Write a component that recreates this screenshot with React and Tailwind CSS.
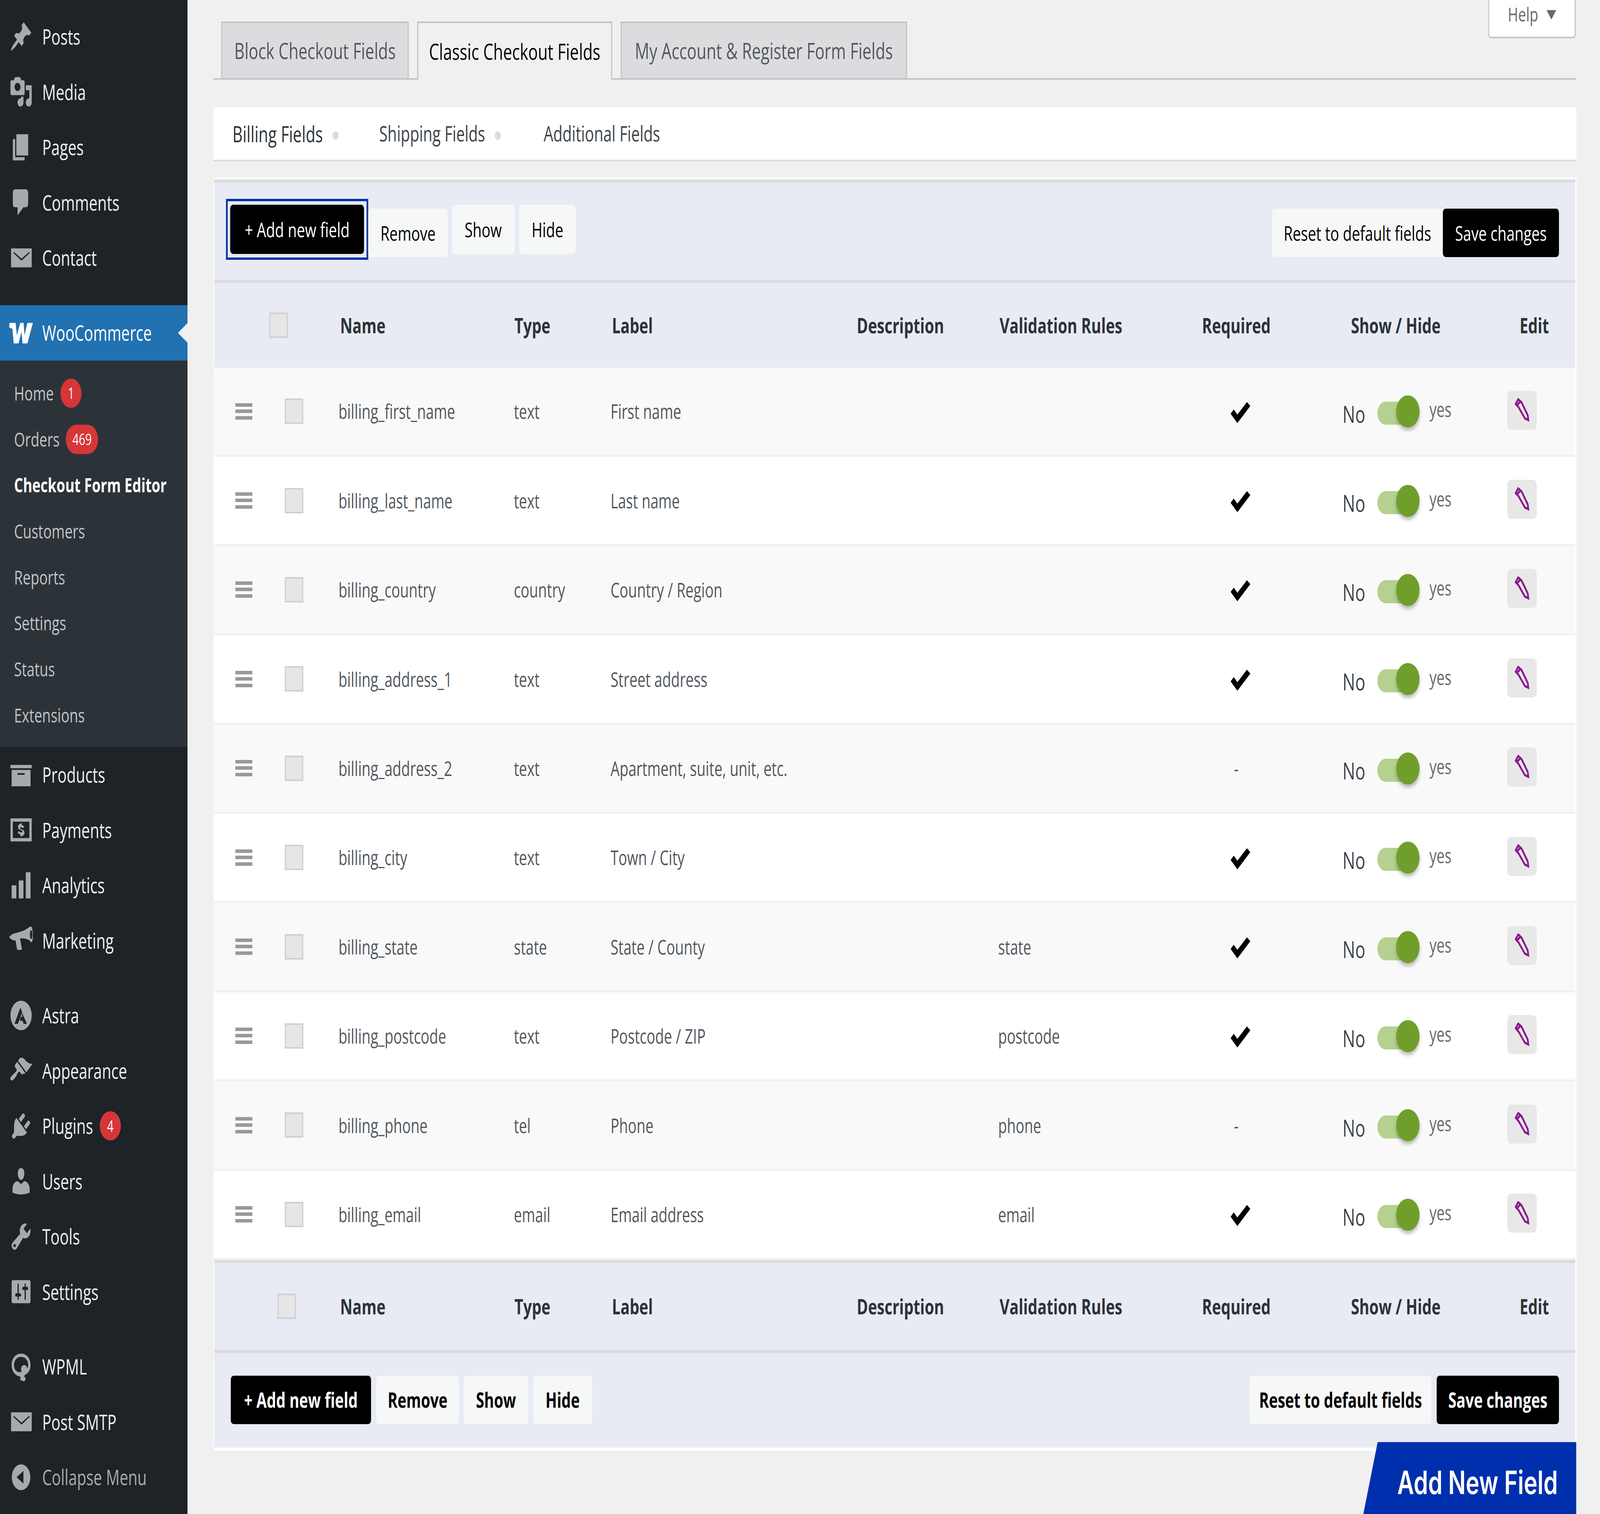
import React, { useState } from "react";

// dashicons-ish paths, 20x20 box
const paths = {
    post: "M10.44 3.02l1.82-1.82 6.36 6.35-1.83 1.82c-1.05-.68-2.48-.57-3.41.36l-.75.75c-.92.93-1.04 2.35-.35 3.41l-1.83 1.82-2.41-2.41-2.8 2.79c-.42.42-3.38 2.71-3.8 2.29s1.86-3.39 2.28-3.81l2.79-2.79L4.1 9.36l1.83-1.82c1.05.69 2.48.57 3.41-.36l.75-.75c.93-.92 1.04-2.35.35-3.41z",
    media: "M13 11V4c0-.55-.45-1-1-1h-1.67L9 1H5L3.67 3H2c-.55 0-1 .45-1 1v7c0 .55.45 1 1 1h10c.55 0 1-.45 1-1zM7 4.5c1.38 0 2.5 1.12 2.5 2.5S8.38 9.5 7 9.5 4.5 8.38 4.5 7 5.62 4.5 7 4.5zM14 6h5v10.5c0 1.38-1.12 2.5-2.5 2.5S14 17.88 14 16.5s1.12-2.5 2.5-2.5c.17 0 .34.02.5.05V9h-3V6zm-4 8.05V13h2v3.5c0 1.38-1.12 2.5-2.5 2.5S7 17.88 7 16.5 8.12 14 9.5 14c.17 0 .34.02.5.05z",
    page: "M6 15V2h10v13H6zm-1 1h8v2H3V5h2v11z",
    comment: "M5 2h9c1.1 0 2 .9 2 2v7c0 1.1-.9 2-2 2h-2l-5 5v-5H5c-1.1 0-2-.9-2-2V4c0-1.1.9-2 2-2z",
    mail: "M1.500 4.200H19v11.600H1.500zM3.800 6.300L10.400 10.500 17 6.300 17.300 7 10.400 11.700 3.500 7z",
    product: "M19 4v2H1V4h18zM2 7h16v10H2V7zm11 3V9H7v1h6z",
    payment: "M1 3h18v14H1V3zm2 2v10h14V5H3zm7.6 1v1.1c1 .1 1.7.5 2.1 1.1l-1.2.8c-.3-.4-.7-.6-1.3-.6-.6 0-1 .2-1 .6 0 .4.4.5 1.3.7 1.3.3 2.4.7 2.4 2 0 1.1-.8 1.8-2.3 2V14H9.4v-1.2c-1.1-.1-1.9-.6-2.3-1.3l1.2-.8c.4.5.9.8 1.6.8.7 0 1.2-.2 1.2-.6 0-.4-.5-.6-1.4-.8-1.2-.3-2.3-.7-2.3-1.9 0-1 .8-1.7 2-1.9V6h1.2z",
    analytics: "M18 18V2h-4v16h4zm-6 0V7H8v11h4zm-6 0v-8H2v8h4z",
    marketing: "M18.2 1.6c.9-.3 1.5 1.6 1.7 3.9.2 2.4 0 5-.9 5.5-.5.2-1.3-.3-2.1-1.2-1.8-.6-3.9-1-6.2-1.1l-1.6 0 1.5 6.2c.1.5-.2.9-.7.9H7.3c-.4 0-.7-.3-.8-.6L5.3 10l-2.4-.1L.2 8.4c-.3-.2-.3-.7 0-.9L3 6l7.2-1.5c2.5-.5 4.8-1.6 6.6-2.6.5-.2 1-.3 1.4-.3zm.3 2.2c-.6 0-1 1-1 2.6s.4 2.7 1 2.7 1-1.1 1-2.7-.4-2.6-1-2.6z",
    appearance: "M14.48 11.06L7.41 3.99l1.5-1.5c.5-.56 2.3-.47 3.51.32 1.21.8 1.43 1.28 2.91 2.1 1.18.64 2.45 1.26 4.45.85zm-.71.71L6.7 4.7 4.93 6.47c-.39.39-.39 1.02 0 1.41l1.06 1.06c.39.39.39 1.03 0 1.42-.6.6-1.43 1.11-2.21 1.69-.35.26-.7.53-1.01.84C1.43 13.23.4 14.98 1.2 15.8c.81.81 2.55-.22 3.91-1.58.31-.31.58-.66.85-1.01.58-.78 1.09-1.61 1.69-2.21.39-.39 1.02-.39 1.41 0l1.06 1.06c.39.39 1.02.39 1.41 0z",
    plugin: "M13.11 4.36L9.87 7.6 8 5.73l3.24-3.24c.35-.34 1.05-.2 1.56.32.52.51.66 1.21.31 1.55zm-8 1.77l.91-1.12 9.01 9.01-1.19.84c-.71.71-2.63 1.16-3.82 1.16H6.14L4.9 17.26c-.59.59-1.54.59-2.12 0-.59-.58-.59-1.53 0-2.12l1.24-1.24v-3.88c0-1.13.4-3.19 1.09-3.89zm7.26 3.97l3.24-3.24c.34-.35 1.04-.21 1.55.31.52.51.66 1.21.31 1.55l-3.24 3.25z",
    users: "M10 9.25c-2.27 0-2.73-3.44-2.73-3.44C7 4.02 7.82 2 9.97 2c2.16 0 2.98 2.02 2.71 3.81 0 0-.41 3.44-2.68 3.44zm0 2.57L12.72 10c2.39 0 4.52 2.33 4.52 4.53v2.49s-3.65 1.13-7.24 1.13c-3.65 0-7.24-1.13-7.24-1.13v-2.49c0-2.25 1.94-4.48 4.47-4.48z",
    tools: "M16.68 9.77c-1.34 1.34-3.3 1.67-4.95.99l-5.41 6.52c-.99.99-2.59.99-3.58 0s-.99-2.59 0-3.57l6.52-5.42c-.68-1.65-.35-3.61.99-4.95 1.28-1.28 3.12-1.62 4.72-1.06l-2.89 2.89 2.82 2.82 2.86-2.87c.53 1.58.18 3.39-1.08 4.65zM3.81 16.21c.4.39 1.04.39 1.43 0 .4-.4.4-1.04 0-1.43-.39-.4-1.03-.4-1.43 0-.39.39-.39 1.03 0 1.43z",
    settings: "M18 16V4c0-.55-.45-1-1-1H3c-.55 0-1 .45-1 1v12c0 .55.45 1 1 1h14c.55 0 1-.45 1-1zM8 11h1c.55 0 1 .45 1 1s-.45 1-1 1H8v1.5c0 .28-.22.5-.5.5s-.5-.22-.5-.5V13H6c-.55 0-1-.45-1-1s.45-1 1-1h1V5.5c0-.28.22-.5.5-.5s.5.22.5.5V11zm5-2h-1c-.55 0-1-.45-1-1s.45-1 1-1h1V5.5c0-.28.22-.5.5-.5s.5.22.5.5V7h1c.55 0 1 .45 1 1s-.45 1-1 1h-1v5.5c0 .28-.22.5-.5.5s-.5-.22-.5-.5V9z",
    astra: "M10 1a9 9 0 1 0 0 18 9 9 0 0 0 0-18zM9.4 5.2l1.5 2.9-3.6 7H4.4l5-9.9zm1.9 3.9l3.7 6h-2.8l-1-1.9H8.7l1.2-2.4 1.4 0-.7-1.4.7-.7z",
    wpml: "M10 2C5.3 2 2 4.9 2 9c0 3.800 3 6.600 7.300 7l.2 2.200 3.300.800 1.200-1.800-1.500-1.600 2.400-1.400C17 13 18 11.300 18 9c0-4.100-3.300-7-8-7zm0 2c3.500 0 6 2.100 6 5 0 .7-.2 1.400-.5 2-.6-1.200-1.700-2-2.900-2-1.500 0-2.600 1.100-2.600 2.500 0 .6.200 1.100.500 1.600C6.600 14 4 11.900 4 9c0-2.900 2.500-5 6-5z",
    collapse: "M10 2.16c4.33 0 7.84 3.51 7.84 7.84s-3.51 7.84-7.84 7.84S2.16 14.33 2.16 10 5.710 2.16 10 2.16zm2 11.72V6.120L6.180 9.970z",
};

const Dashicon = ({ d }) => (
    <svg viewBox="0 0 20 20" className="w-[84px] h-[84px] fill-[#a7aaad] shrink-0">
        <path fillRule="evenodd" d={d} />
    </svg>
);

const WooIcon = () => (
    <svg viewBox="0 0 28 20" className="w-[84px] h-[60px] fill-white shrink-0">
        <path d="M0 1.500h7.500L9 12 13 1.500h4L18 12l3.500-10.500H28L21.500 19h-5.800L14.500 9 11 19H5.300L3.700 6.500 0 5.500z" />
    </svg>
);

const Badge = ({ children, className }) => (
    <span className={"flex items-center justify-center h-[75px] rounded-full bg-[#d63638] text-white text-[40px] " + className}>
        {children}
    </span>
);

const MenuItem = ({ icon, label, badge, muted }) => (
    <div className="flex items-center h-[141.500px] pl-[33px]">
        <Dashicon d={icon} />
        <span className={"ml-[33px] text-[54px] " + (muted ? "text-[#a7aaad]" : "text-[#f0f0f1]")}>{label}</span>
        {badge && <Badge className="ml-[24px] w-[75px]">{badge}</Badge>}
    </div>
);

const subItems = [
    { label: "Home", badge: "1", badgeClass: "ml-[24px] w-[75px]" },
    { label: "Orders", badge: "469", badgeClass: "ml-[22px] w-[115px]" },
    { label: "Checkout Form Editor", active: true },
    { label: "Customers" },
    { label: "Reports" },
    { label: "Settings" },
    { label: "Status" },
    { label: "Extensions" },
];

const Sidebar = () => (
    <aside className="w-[667px] shrink-0 bg-[#1d2327] pt-[23px]">
        <MenuItem icon={paths.post} label="Posts" />
        <MenuItem icon={paths.media} label="Media" />
        <MenuItem icon={paths.page} label="Pages" />
        <MenuItem icon={paths.comment} label="Comments" />
        <MenuItem icon={paths.mail} label="Contact" />

        <div className="relative flex items-center h-[142px] mt-[50px] pl-[33px] bg-[#2271b1]">
            <WooIcon />
            <span className="ml-[33px] text-[54px] text-white">WooCommerce</span>
            <span className="absolute right-0 top-[46px] w-0 h-0 border-y-[25px] border-y-transparent border-r-[34px] border-r-[#f0f0f1]"></span>
        </div>

        <div className="bg-[#2c3338] pt-[25px] pb-[23px]">
            {subItems.map((item) => (
                <div key={item.label} className="flex items-center h-[117.700px] pl-[50px]">
                    <span className={"text-[50px] " + (item.active ? "font-bold text-white" : "text-[#c3c4c7]")}>
                        {item.label}
                    </span>
                    {item.badge && <Badge className={item.badgeClass}>{item.badge}</Badge>}
                </div>
            ))}
        </div>

        <MenuItem icon={paths.product} label="Products" />
        <MenuItem icon={paths.payment} label="Payments" />
        <MenuItem icon={paths.analytics} label="Analytics" />
        <MenuItem icon={paths.marketing} label="Marketing" />
        <div className="h-[50px]"></div>
        <MenuItem icon={paths.astra} label="Astra" />
        <MenuItem icon={paths.appearance} label="Appearance" />
        <MenuItem icon={paths.plugin} label="Plugins" badge="4" />
        <MenuItem icon={paths.users} label="Users" />
        <MenuItem icon={paths.tools} label="Tools" />
        <MenuItem icon={paths.settings} label="Settings" />
        <div className="h-[50px]"></div>
        <MenuItem icon={paths.wpml} label="WPML" />
        <MenuItem icon={paths.mail} label="Post SMTP" />
        <MenuItem icon={paths.collapse} label="Collapse Menu" muted />
    </aside>
);

const Checkbox = ({ className }) => (
    <span className={"block w-[66px] h-[65px] bg-[#e6e6e6] border-[4px] border-[#d0d0d0] " + className}></span>
);

const HeadRow = ({ boxClass, height }) => (
    <div className={"grid grid-cols-[442px_624px_344px_874px_505px_725px_530px_600px_1fr] items-center bg-[#e8ebf3] text-[54px] font-bold text-[#2c3338] " + height}>
        <div><Checkbox className={boxClass} /></div>
        <span className="pl-[6px]">Name</span>
        <span className="pl-[2px]">Type</span>
        <span className="pl-[5px]">Label</span>
        <span className="pl-[2px]">Description</span>
        <span className="pl-[5px]">Validation Rules</span>
        <span>Required</span>
        <span>Show / Hide</span>
        <span>Edit</span>
    </div>
);

const rows = [
    { name: "billing_first_name", type: "text", label: "First name", required: true },
    { name: "billing_last_name", type: "text", label: "Last name", required: true },
    { name: "billing_country", type: "country", label: "Country / Region", required: true },
    { name: "billing_address_1", type: "text", label: "Street address", required: true },
    { name: "billing_address_2", type: "text", label: "Apartment, suite, unit, etc.", required: false },
    { name: "billing_city", type: "text", label: "Town / City", required: true },
    { name: "billing_state", type: "state", label: "State / County", rule: "state", required: true },
    { name: "billing_postcode", type: "text", label: "Postcode / ZIP", rule: "postcode", required: true },
    { name: "billing_phone", type: "tel", label: "Phone", rule: "phone", required: false },
    { name: "billing_email", type: "email", label: "Email address", rule: "email", required: true },
];

const FieldRow = ({ row, index }) => (
    <div className={"grid grid-cols-[442px_624px_344px_874px_505px_725px_500px_586px_1fr] items-center h-[228.400px] border-b-[5px] border-[#f0f0f1] text-[51px] text-[#50575e] " + (index % 2 === 0 ? "bg-[#f9f9f9]" : "bg-white")}>
        <div className="flex items-center pl-[75px]">
            <svg viewBox="0 0 61 42" className="w-[61px] h-[42px] fill-[#999999]">
                <rect y="0" width="61" height="9" />
                <rect y="16" width="61" height="9" />
                <rect y="33" width="61" height="9" />
            </svg>
            <Checkbox className="ml-[115px]" />
        </div>
        <span>{row.name}</span>
        <span>{row.type}</span>
        <span>{row.label}</span>
        <span></span>
        <span>{row.rule}</span>
        <div className="pl-[102px]">
            {row.required ? (
                <svg viewBox="0 0 70 54" className="w-[70px] h-[54px] fill-black mt-[6px]">
                    <path d="M0 30l11-11 13 13L58 0l12 10-46 44z" />
                </svg>
            ) : (
                <span className="pl-[12px] text-[#50575e]">-</span>
            )}
        </div>
        <div className="flex items-center">
            <span className="text-[60px] text-[#3c434a] w-[124px] mt-[12px]">No</span>
            <span className="relative block w-[130px] h-[59px] mt-[10px] rounded-full bg-[#b4d18f]">
                <span className="absolute right-[-20px] top-[-16px] w-[83px] h-[82px] rounded-full bg-[#6f9f2a] shadow-[0_8px_10px_rgba(0,0,0,0.25)]"></span>
            </span>
            <span className="ml-[55px] mb-[10px] text-[#646970]">yes</span>
        </div>
        <div className="flex items-center justify-center w-[105px] h-[100px] mb-[6px] rounded-[14px] bg-[#e8e8e8]">
            <svg viewBox="0 0 52 62" className="w-[52px] h-[62px] fill-none stroke-[#8b1a8b] stroke-[6]">
                <path d="M12 3L24 11 46 44 48 56 36 52 13 23 3 15z" />
                <path d="M6 19L21 8" />
            </svg>
        </div>
    </div>
);

const LightButton = ({ className, children }) => (
    <button className={"flex items-center justify-center rounded-[10px] bg-[#f6f7f7] text-black " + className}>
        {children}
    </button>
);

const DarkButton = ({ className, children }) => (
    <button className={"flex items-center justify-center rounded-[10px] bg-black text-white " + className}>
        {children}
    </button>
);

const App = () => {
    // the browser window can come up narrower than the 5692 wide design, so squeeze to fit
    const [fit] = useState(() => Math.min(1, window.innerWidth / 5692));

    return (
        <div className="w-screen h-screen overflow-hidden">
            <div
                className="flex h-[3875px] w-[5692px] origin-top-left bg-[#f0f0f1] font-['Open_Sans',sans-serif]"
                style={{ transform: `scaleX(${fit})` }}
            >
                <Sidebar />

                <main className="relative ml-[93px] w-[4848px] shrink-0 pt-[55px]">
                    {/* Help tab */}
                    <div className="absolute top-0 right-[2px] flex items-center justify-center gap-[30px] w-[312px] h-[98px] bg-white border-[4px] border-t-0 border-[#c3c4c7] rounded-b-[12px] text-[50px] text-[#646970]">
                        <span className="-mt-[22px]">Help</span>
                        <span className="-mt-[18px] w-0 h-0 border-x-[17px] border-x-transparent border-t-[24px] border-t-[#646970]"></span>
                    </div>

                    {/* Top tabs */}
                    <nav className="flex h-[149px] pl-[27px] border-b-[4px] border-[#c3c4c7] text-[57px] font-medium">
                        <div className="flex items-center justify-center w-[667px] h-[149px] bg-[#dcdcde] border-[4px] border-[#c3c4c7] text-[#50575e]">Block Checkout Fields</div>
                        <div className="flex items-center justify-center w-[694px] h-[149px] ml-[30px] bg-[#f0f0f1] border-[4px] border-b-0 border-[#c3c4c7] text-black">Classic Checkout Fields</div>
                        <div className="flex items-center justify-center w-[1019px] h-[149px] ml-[30px] bg-[#dcdcde] border-[4px] border-[#c3c4c7] text-[#50575e]">My Account &amp; Register Form Fields</div>
                    </nav>

                    {/* Sub tabs */}
                    <div className="flex items-center h-[139px] mt-[70px] bg-white border-b-[4px] border-[#dcdcde] text-[54px] whitespace-nowrap">
                        <span className="ml-[67px] w-[320px] text-[56px] font-medium text-[#2c3338]">Billing Fields</span>
                        <span className="ml-[36px] mt-[10px] w-[22px] h-[22px] rounded-full bg-[#dcdcde]"></span>
                        <span className="ml-[144px] w-[376px] text-[#3c434a]">Shipping Fields</span>
                        <span className="ml-[35px] mt-[10px] w-[22px] h-[22px] rounded-full bg-[#dcdcde]"></span>
                        <span className="ml-[152px] text-[#3c434a]">Additional Fields</span>
                    </div>

                    {/* Fields panel */}
                    <section className="mt-[41px] bg-white pt-[5px] pb-[8px] pl-[2px] pr-[4px]">
                        <div className="flex items-start justify-between h-[265px] bg-[#e8ebf3] border-t-[8px] border-b-[7px] border-[#dcdcde] text-[52px]">
                            <div className="flex items-start pl-[42px] pt-[42px]">
                                <div className="border-[6px] border-[#002fad] p-[9px] bg-[#e8e8ee]">
                                    <DarkButton className="w-[476px] h-[126px]">+ Add new field</DarkButton>
                                </div>
                                <LightButton className="w-[283px] h-[124px] mt-[25px]">Remove</LightButton>
                                <LightButton className="w-[224px] h-[126px] ml-[14px] mt-[15px]">Show</LightButton>
                                <LightButton className="w-[201px] h-[126px] ml-[16px] mt-[15px]">Hide</LightButton>
                            </div>
                            <div className="flex pr-[58px] pt-[67px]">
                                <LightButton className="w-[608px] h-[124px]">Reset to default fields</LightButton>
                                <DarkButton className="w-[413px] h-[124px]">Save changes</DarkButton>
                            </div>
                        </div>

                        <HeadRow boxClass="ml-[196px]" height="h-[217px]" />

                        {rows.map((row, i) => (
                            <FieldRow key={row.name} row={row} index={i} />
                        ))}

                        <HeadRow boxClass="ml-[225px]" height="h-[238px] border-t-[8px] border-b-[8px] border-[#dcdcde]" />

                        <div className="flex items-start justify-between h-[242px] pt-[58px] bg-[#e8ebf3] text-[53px] font-bold">
                            <div className="flex pl-[59px]">
                                <DarkButton className="w-[499px] h-[124px]">+ Add new field</DarkButton>
                                <LightButton className="w-[295px] h-[124px] ml-[18px]">Remove</LightButton>
                                <LightButton className="w-[229px] h-[124px] ml-[17px]">Show</LightButton>
                                <LightButton className="w-[211px] h-[124px] ml-[17px]">Hide</LightButton>
                            </div>
                            <div className="flex pr-[58px]">
                                <LightButton className="w-[646px] h-[124px]">Reset to default fields</LightButton>
                                <DarkButton className="w-[435px] h-[124px] ml-[19px]">Save changes</DarkButton>
                            </div>
                        </div>
                    </section>

                    {/* Promo banner sits over the panel corner */}
                    <div className="absolute right-0 bottom-0 flex items-center justify-end w-[758px] h-[184px] pr-[66px] pt-[22px] bg-[#002fad] [clip-path:polygon(51px_0,100%_0,100%_100%,0_100%)] font-['Inter',sans-serif] text-[82px] font-semibold text-white">
                        Add New Field
                    </div>
                </main>
            </div>
        </div>
    );
};

export default App;
